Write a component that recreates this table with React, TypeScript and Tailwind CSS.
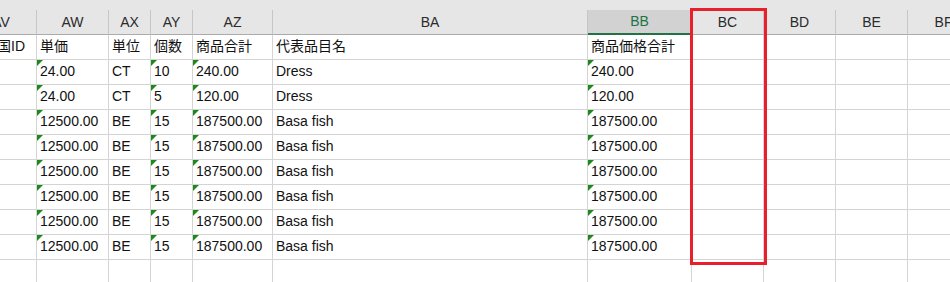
const COLUMNS = [
  { key: "AV", width: "w-[71px] -ml-[34px]" },
  { key: "AW", width: "w-[72px]" },
  { key: "AX", width: "w-[42px]" },
  { key: "AY", width: "w-[42px]" },
  { key: "AZ", width: "w-[80px]" },
  { key: "BA", width: "w-[315px]" },
  { key: "BB", width: "w-[104px]" },
  { key: "BC", width: "w-[72px]" },
  { key: "BD", width: "w-[72px]" },
  { key: "BE", width: "w-[72px]" },
  { key: "BF", width: "w-[72px]" },
];

// columns holding numbers stored as text get the little green flag
const FLAGGED = new Set(["AW", "AY", "AZ", "BB"]);

const LABELS = ["原産国ID", "単価", "単位", "個数", "商品合計", "代表品目名", "商品価格合計", "", "", "", ""];

const DRESS = (unit: string, qty: string, total: string) => ["", unit, "CT", qty, total, "Dress", total, "", "", "", ""];
const BASA = ["", "12500.00", "BE", "15", "187500.00", "Basa fish", "187500.00", "", "", "", ""];

const ROWS = [
  DRESS("24.00", "10", "240.00"),
  DRESS("24.00", "5", "120.00"),
  BASA,
  BASA,
  BASA,
  BASA,
  BASA,
  BASA,
];

function Flag() {
  return (
    <svg className="absolute left-0 top-0" width="6" height="6" viewBox="0 0 6 6">
      <polygon points="0,0 6,0 0,6" fill="#1b8a1b" />
    </svg>
  );
}

function Row({ cells, flagged }: { cells: string[]; flagged: boolean }) {
  return (
    <div className="flex h-[25px]">
      {COLUMNS.map((col, i) => (
        <div
          key={col.key}
          className={`relative shrink-0 overflow-hidden whitespace-nowrap border-b border-r border-[#d4d4d4] pl-[3px] pt-[3px] leading-[16px] ${col.width}`}
        >
          {flagged && cells[i] !== "" && FLAGGED.has(col.key) && <Flag />}
          {cells[i]}
        </div>
      ))}
    </div>
  );
}

export default function App() {
  return (
    <div className="relative h-[282px] w-[950px] overflow-hidden bg-white font-['Liberation_Sans','Noto_Sans_CJK_JP',sans-serif] text-[14px] text-[#111]">
      <div className="bg-[#e6e6e6] pt-[10px]">
        <div className="flex h-[25px]">
          {COLUMNS.map((col) =>
            col.key === "BB" ? (
              <div
                key={col.key}
                className={`flex shrink-0 items-center justify-center border-b-2 border-r border-b-[#217346] border-r-[#c6c6c6] bg-[#d2d2d2] text-[#217346] ${col.width}`}
              >
                {col.key}
              </div>
            ) : (
              <div
                key={col.key}
                className={`flex shrink-0 items-center justify-center border-b border-r border-b-[#ababab] border-r-[#c6c6c6] text-[#2b2b2b] ${col.width}`}
              >
                {col.key}
              </div>
            )
          )}
        </div>
      </div>

      <Row cells={LABELS} flagged={false} />
      {ROWS.map((cells, i) => (
        <Row key={i} cells={cells} flagged />
      ))}
      <Row cells={["", "", "", "", "", "", "", "", "", "", ""]} flagged={false} />

      <div className="absolute left-[690px] top-[8px] h-[257px] w-[77px] border-[3px] border-[#e8202c]" />
    </div>
  );
}
